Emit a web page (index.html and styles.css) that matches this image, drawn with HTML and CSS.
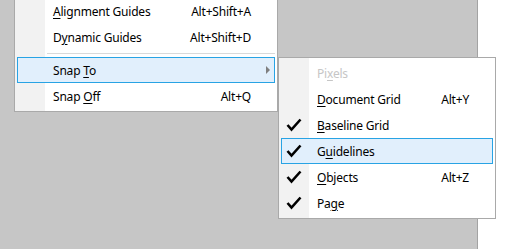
FILE: index.html
```html
<!DOCTYPE html>
<html>
<head>
<meta charset="UTF-8">
<title>Snap To</title>
<link rel="stylesheet" href="styles.css">
</head>
<body>
<div class="screen">
  <div class="desk">
    <div class="menu main">
      <div class="item"><span class="icon"></span><span class="label"><u>A</u>lignment Guides</span><span class="key">Alt+Shift+A</span></div>
      <div class="item"><span class="icon"></span><span class="label">D<u>y</u>namic Guides</span><span class="key">Alt+Shift+D</span></div>
      <div class="sep"></div>
      <div class="item hot"><span class="icon"></span><span class="label">Snap <u>T</u>o</span><span class="arrow"></span></div>
      <div class="item"><span class="icon"></span><span class="label">Snap <u>O</u>ff</span><span class="key">Alt+Q</span></div>
    </div>

    <div class="menu sub">
      <div class="item off"><span class="icon"></span><span class="label">Pi<u>x</u>els</span></div>
      <div class="item"><span class="icon"></span><span class="label"><u>D</u>ocument Grid</span><span class="key">Alt+Y</span></div>
      <div class="item"><span class="icon"><svg class="check" width="16" height="14" viewBox="0 0 16 14"><polyline points="1.5,7 5.5,11.5 14.5,1.5"/></svg></span><span class="label"><u>B</u>aseline Grid</span></div>
      <div class="item hot"><span class="icon"><svg class="check" width="16" height="14" viewBox="0 0 16 14"><polyline points="1.5,7 5.5,11.5 14.5,1.5"/></svg></span><span class="label">G<u>u</u>idelines</span></div>
      <div class="item"><span class="icon"><svg class="check" width="16" height="14" viewBox="0 0 16 14"><polyline points="1.5,7 5.5,11.5 14.5,1.5"/></svg></span><span class="label"><u>O</u>bjects</span><span class="key">Alt+Z</span></div>
      <div class="item"><span class="icon"><svg class="check" width="16" height="14" viewBox="0 0 16 14"><polyline points="1.5,7 5.5,11.5 14.5,1.5"/></svg></span><span class="label">Pa<u>g</u>e</span></div>
    </div>
  </div>
  <div class="window"></div>
</div>
</body>
</html>
```

FILE: styles.css
```css
*{ margin:0; padding:0; box-sizing:border-box;}
html,body{ height:100%; overflow:hidden;}
body{ background:#c6c6c6; font:12px "Noto Sans","Open Sans",sans-serif; color:#000;}

.screen{ display:flex; height:100%;}
.desk{ position:relative; width:477px; flex:none;}
.window{ flex:1; background:#fff; border-left:1px solid #a3a3a3;}

/* menus */
.menu{ border:1px solid #a9a9a9; padding:2px; background:linear-gradient(to right,#f2f2f2 30px,#fff 30px);}
.main{ width:264px; margin:-5px 0 0 14px;}
.sub{ position:absolute; left:278px; top:57px; width:218px; height:162px; z-index:1;}

.item{ display:flex; align-items:center; height:26px; border:1px solid transparent; line-height:22px; white-space:nowrap; letter-spacing:-0.2px;}
.item.hot{ background:#e1effc; border-color:#28a3e4;}
.item .icon{ width:24px; flex:none; display:flex; justify-content:center; align-items:center;}
.item .label{ flex:1; margin-left:11px; padding-top:2px;}
.item .key{ margin-right:23px; padding-top:2px;}
.item u{ text-decoration:underline; text-underline-offset:2px;}
.item.off{ color:#c6c6c6;}
.arrow{ width:0; height:0; border-left:4px solid #7f7f7f; border-top:4px solid transparent; border-bottom:4px solid transparent; margin-right:4px;}

.sep{ height:1px; background:#d9d9d9; margin:3px 0 3px 30px;}

.check{ display:block;}
.check polyline{ fill:none; stroke:#000; stroke-width:2.6; stroke-linejoin:miter;}
```
